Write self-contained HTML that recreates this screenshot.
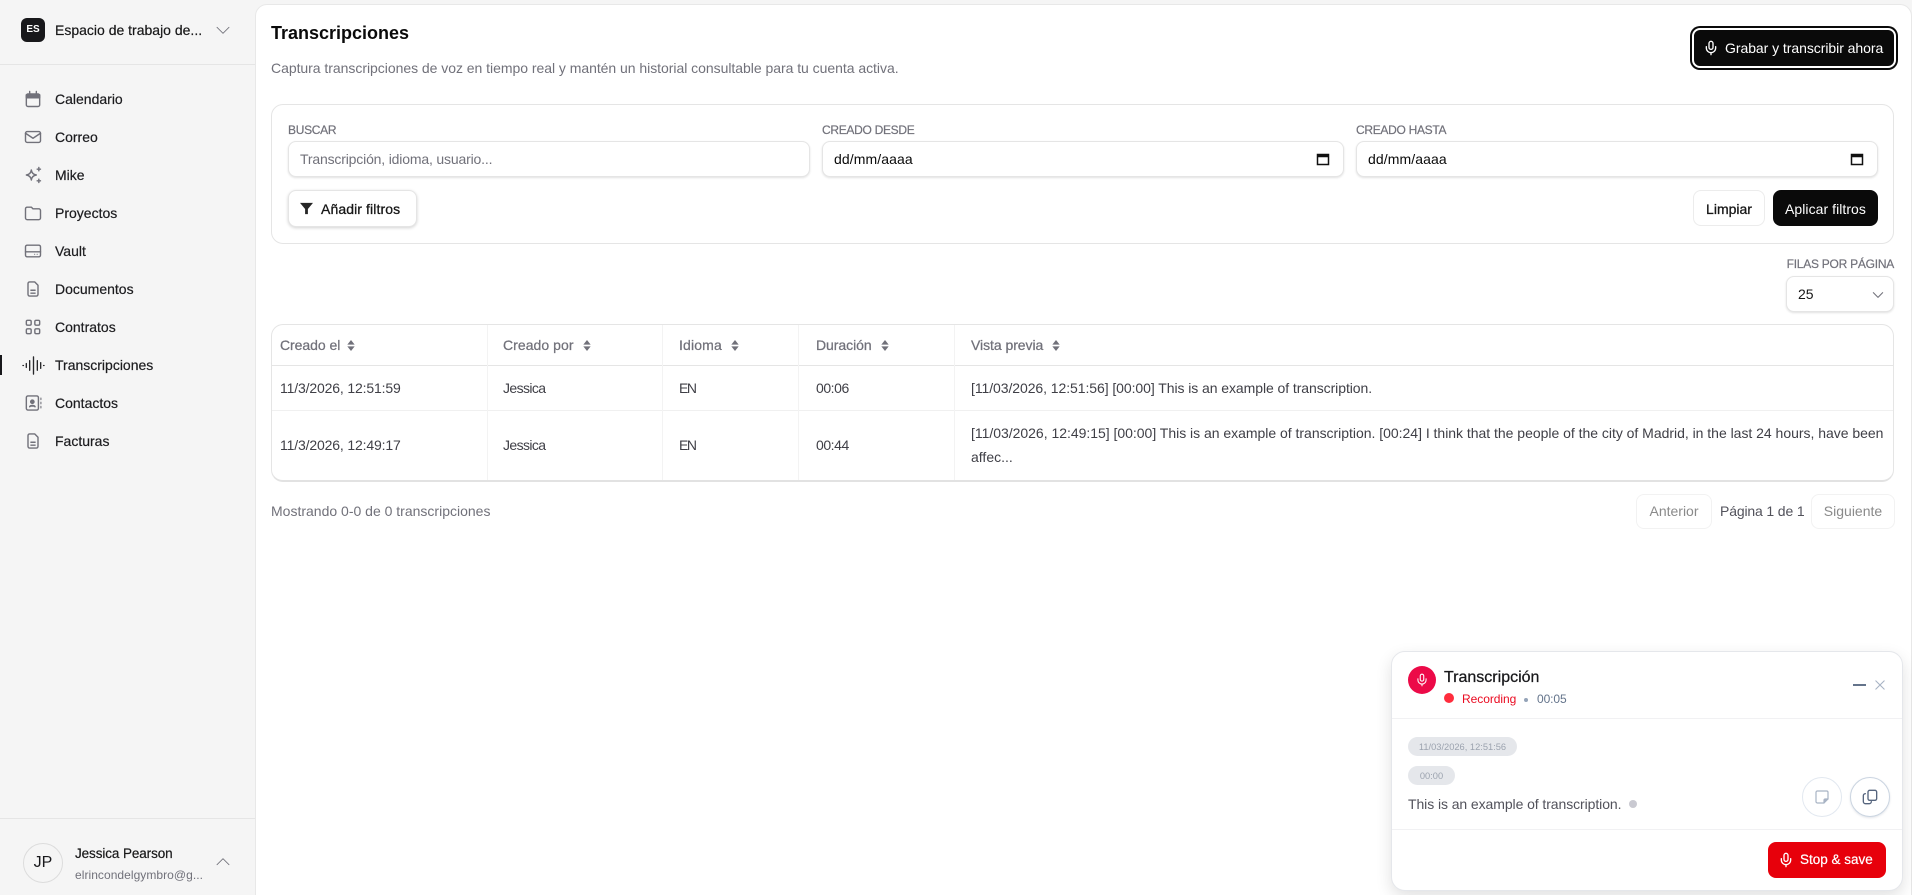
<!DOCTYPE html>
<html lang="es"><head><meta charset="utf-8"><title>Transcripciones</title>
<style>
*{box-sizing:border-box}
html,body{margin:0;padding:0;width:1912px;height:895px;overflow:hidden;background:#f5f5f5;font-family:"Liberation Sans",sans-serif;color:#171717}
#r{position:relative;width:1912px;height:895px;overflow:hidden;background:#f5f5f5}
.t{position:absolute;white-space:nowrap;line-height:20px;height:20px}
.a{position:absolute}
svg{position:absolute;display:block;fill:none;stroke:currentColor;stroke-width:2;stroke-linecap:round;stroke-linejoin:round}
.nav{font-size:14px;font-weight:500;left:55px;color:#1c1c1f;-webkit-text-stroke:.2px #1c1c1f}
.ic{left:23px;width:20px;height:20px;color:#71717a;stroke-width:1.7}
.lab{font-size:12px;color:#71717a;-webkit-text-stroke:.2px #71717a;letter-spacing:-.3px}
.box{position:absolute;background:#fff;border:1px solid #e5e5e5;border-radius:8px;box-shadow:0 1px 2px rgba(0,0,0,.12)}
.th{font-size:14px;color:#71717a;-webkit-text-stroke:.25px #71717a;line-height:20px;letter-spacing:-.05px}
.td{font-size:14px;color:#3f3f46}
.d{letter-spacing:-.15px}.j{letter-spacing:-.6px}.e{letter-spacing:-1.5px}.n{letter-spacing:-.45px}
.vl{position:absolute;top:325px;width:1px;height:155px;background:#f3f3f3}
.hl{position:absolute;left:272px;width:1621px;height:1px}
.sm{font-size:14px;-webkit-text-stroke:.3px #171717;color:#171717}
</style></head><body><div id="r">
<!-- sidebar -->
<div class="a" style="left:0;top:64px;width:255px;height:1px;background:#e5e5e5"></div>
<div class="a" style="left:21px;top:18px;width:24px;height:24px;border-radius:6px;background:#18181b;color:#fff;font-size:10px;font-weight:700;line-height:24px;text-align:center">ES</div>
<div class="t" style="left:55px;top:20px;font-size:14px;font-weight:500;-webkit-text-stroke:.2px #1c1c1f">Espacio de trabajo de...</div>
<svg viewBox="0 0 24 24" style="left:215px;top:22px;width:16px;height:16px;color:#71717a;stroke-width:1.300"><path d="m3 8 9 9 9-9"/></svg>

<svg class="ic" viewBox="0 0 24 24" style="top:89px"><rect x="4" y="6" width="16" height="15" rx="2"/><path d="M4 7h16v3.500H4z" fill="#71717a"/><path d="M8 3v3M16 3v3"/></svg><div class="t nav" style="top:89px">Calendario</div>
<svg class="ic" viewBox="0 0 24 24" style="top:127px"><rect x="3" y="5.500" width="18" height="13" rx="2"/><path d="m3 7.500 9 6 9-6"/></svg><div class="t nav" style="top:127px">Correo</div>
<svg class="ic" viewBox="0 0 24 24" style="top:165px"><path d="M10 6c.5 3.500 2.500 5.500 6 6-3.500.5-5.500 2.500-6 6-.5-3.500-2.500-5.500-6-6 3.500-.5 5.500-2.500 6-6z"/><path d="M19 3v4M17 5h4M19 17v4M17 19h4"/></svg><div class="t nav" style="top:165px">Mike</div>
<svg class="ic" viewBox="0 0 24 24" style="top:203px"><path d="M19 20a2 2 0 0 0 2-2V9a2 2 0 0 0-2-2h-7l-2-2H5a2 2 0 0 0-2 2v11a2 2 0 0 0 2 2z"/></svg><div class="t nav" style="top:203px">Proyectos</div>
<svg class="ic" viewBox="0 0 24 24" style="top:241px"><rect x="3" y="5" width="18" height="14" rx="2"/><path d="M3 13h18"/><path d="M14 16h.01M17 16h.01" stroke-width="1.300"/></svg><div class="t nav" style="top:241px">Vault</div>
<svg class="ic" viewBox="0 0 24 24" style="top:279px"><path d="M14 3.500H8a2 2 0 0 0-2 2v13a2 2 0 0 0 2 2h8a2 2 0 0 0 2-2v-11z"/><path d="M9.500 13.500h5M9.500 17h5"/></svg><div class="t nav" style="top:279px">Documentos</div>
<svg class="ic" viewBox="0 0 24 24" style="top:317px"><rect x="4" y="4" width="5.800" height="5.800" rx="1.500"/><rect x="14.200" y="4" width="5.800" height="5.800" rx="1.500"/><rect x="4" y="14.200" width="5.800" height="5.800" rx="1.500"/><rect x="14.200" y="14.200" width="5.800" height="5.800" rx="1.500"/></svg><div class="t nav" style="top:317px">Contratos</div>
<div class="a" style="left:0;top:355px;width:2px;height:20px;background:#18181b"></div>
<svg class="ic" viewBox="0 0 24 24" style="top:355px;color:#27272a;stroke-width:1.400;left:21.500px;width:23px;height:23px;margin-top:-1px"><path d="M1 12h.5M4.500 10v4M8 7v10M12 3v18M16 7v10M19.500 9v6M23 12h-.5"/></svg><div class="t nav" style="top:355px">Transcripciones</div>
<svg class="ic" viewBox="0 0 24 24" style="top:393px"><rect x="4" y="3.500" width="14.500" height="17" rx="2"/><circle cx="11.200" cy="10.500" r="2" fill="#71717a"/><path d="M8 16.500c1-2 5.500-2 6.500 0" fill="#71717a"/><path d="M21.500 6v2M21.500 11v2M21.500 16v2" stroke-width="1.300"/></svg><div class="t nav" style="top:393px">Contactos</div>
<svg class="ic" viewBox="0 0 24 24" style="top:431px"><path d="M14 3.500H8a2 2 0 0 0-2 2v13a2 2 0 0 0 2 2h8a2 2 0 0 0 2-2v-11z"/><path d="M9.500 13.500h5M9.500 17h5"/></svg><div class="t nav" style="top:431px">Facturas</div>

<div class="a" style="left:0;top:818px;width:255px;height:1px;background:#e5e5e5"></div>
<div class="a" style="left:23px;top:843px;width:40px;height:40px;border-radius:50%;border:1px solid #dcdcdc;background:#f5f5f5;font-size:16px;line-height:38px;text-align:center;color:#18181b">JP</div>
<div class="t" style="left:75px;top:844px;font-size:13.500px;font-weight:500;letter-spacing:-.1px;-webkit-text-stroke:.2px #1c1c1f">Jessica Pearson</div>
<div class="t" style="left:75px;top:865px;font-size:12px;color:#71717a;letter-spacing:.05px">elrincondelgymbro@g...</div>
<svg viewBox="0 0 24 24" style="left:215px;top:854px;width:16px;height:16px;color:#71717a;stroke-width:1.300"><path d="m3 16 9-9 9 9"/></svg>

<!-- main -->
<div class="a" style="left:255px;top:4px;width:1657px;height:900px;background:#fff;border:1px solid #e8e8e8;border-radius:12px 12px 0 0"></div>
<div class="t" style="left:271px;top:23px;font-size:18px;font-weight:700;color:#0a0a0a">Transcripciones</div>
<div class="t" style="left:271px;top:58px;font-size:14px;letter-spacing:-.035px;color:#71717a">Captura transcripciones de voz en tiempo real y mantén un historial consultable para tu cuenta activa.</div>

<div class="a" style="left:1690px;top:26px;width:208px;height:44px;border-radius:10px;background:#0a0a0a"></div>
<div class="a" style="left:1692px;top:28px;width:204px;height:40px;border-radius:8px;background:#0a0a0a;border:2px solid #fff"></div>
<svg viewBox="0 0 24 24" style="left:1703px;top:40px;width:16px;height:16px;color:#fff"><rect x="9" y="2" width="6" height="12" rx="3"/><path d="M19 10v2a7 7 0 0 1-14 0v-2M12 19v3"/></svg>
<div class="t" style="left:1725px;top:38px;font-size:14px;letter-spacing:-.05px;font-weight:500;color:#fff">Grabar y transcribir ahora</div>

<!-- filters -->
<div class="a" style="left:271px;top:104px;width:1623px;height:140px;border:1px solid #e5e5e5;border-radius:12px;background:#fff"></div>
<div class="t lab" style="left:288px;top:120px">BUSCAR</div>
<div class="t lab" style="left:822px;top:120px">CREADO DESDE</div>
<div class="t lab" style="left:1356px;top:120px">CREADO HASTA</div>
<div class="box" style="left:288px;top:141px;width:522px;height:36px"></div>
<div class="t" style="left:300px;top:149px;font-size:14px;letter-spacing:-.17px;color:#71717a">Transcripción, idioma, usuario...</div>
<div class="box" style="left:822px;top:141px;width:522px;height:36px"></div>
<div class="t" style="left:834px;top:149px;font-size:14px;letter-spacing:.1px;color:#0a0a0a">dd/mm/aaaa</div>
<svg viewBox="0 0 14 14" style="left:1316px;top:152px;width:14px;height:14px;color:#111;stroke-width:1.500;stroke-linecap:butt;stroke-linejoin:miter"><rect x="1.500" y="2.500" width="11" height="10"/><path d="M1 4h12" stroke-width="2.500"/></svg>
<div class="box" style="left:1356px;top:141px;width:522px;height:36px"></div>
<div class="t" style="left:1368px;top:149px;font-size:14px;letter-spacing:.1px;color:#0a0a0a">dd/mm/aaaa</div>
<svg viewBox="0 0 14 14" style="left:1850px;top:152px;width:14px;height:14px;color:#111;stroke-width:1.500;stroke-linecap:butt;stroke-linejoin:miter"><rect x="1.500" y="2.500" width="11" height="10"/><path d="M1 4h12" stroke-width="2.500"/></svg>

<div class="box" style="left:288px;top:190px;width:129px;height:37px;box-shadow:0 1px 3px rgba(0,0,0,.18)"></div>
<svg viewBox="0 0 14 14" style="left:300px;top:202px;width:13px;height:13px;fill:#262626;stroke:none"><path d="M0 1h14L8.500 7.500V13h-3V7.500z"/></svg>
<div class="t sm" style="left:321px;top:199px;letter-spacing:.1px">Añadir filtros</div>
<div class="a" style="left:1693px;top:190px;width:72px;height:36px;border:1px solid #ececec;border-radius:8px;background:#fff"></div>
<div class="t sm" style="left:1693px;width:72px;text-align:center;top:199px">Limpiar</div>
<div class="a" style="left:1773px;top:190px;width:105px;height:36px;border-radius:8px;background:#0a0a0a"></div>
<div class="t" style="left:1773px;width:105px;text-align:center;top:199px;font-size:14px;letter-spacing:.05px;font-weight:500;color:#fff">Aplicar filtros</div>

<div class="t lab" style="right:18px;top:254px;letter-spacing:-.25px">FILAS POR PÁGINA</div>
<div class="box" style="left:1786px;top:276px;width:108px;height:36px"></div>
<div class="t" style="left:1798px;top:284px;font-size:14px;color:#171717">25</div>
<svg viewBox="0 0 24 24" style="left:1871px;top:288px;width:14px;height:14px;color:#71717a;stroke-width:1.800"><path d="m4 8 8 8 8-8"/></svg>

<!-- table -->
<div class="a" style="left:271px;top:324px;width:1623px;height:158px;border:1px solid #e5e5e5;border-bottom:2px solid #e2e2e2;border-radius:12px;background:#fff"></div>
<div class="hl" style="top:365px;background:#e5e5e5"></div>
<div class="hl" style="top:410px;background:#f0f0f0"></div>
<div class="vl" style="left:487px"></div><div class="vl" style="left:662px"></div><div class="vl" style="left:798px"></div><div class="vl" style="left:954px"></div>
<div class="t th" style="left:280px;top:335px">Creado el</div>
<div class="t th" style="left:503px;top:335px;letter-spacing:.05px">Creado por</div>
<div class="t th" style="left:679px;top:335px;letter-spacing:.15px">Idioma</div>
<div class="t th" style="left:816px;top:335px">Duración</div>
<div class="t th" style="left:971px;top:335px">Vista previa</div>
<svg viewBox="0 0 8 12" style="left:347px;top:340px;width:8px;height:11px;fill:#71717a;stroke:none"><path d="M4 0l4 5H0zM0 7h8l-4 5z"/></svg>
<svg viewBox="0 0 8 12" style="left:583px;top:340px;width:8px;height:11px;fill:#71717a;stroke:none"><path d="M4 0l4 5H0zM0 7h8l-4 5z"/></svg>
<svg viewBox="0 0 8 12" style="left:731px;top:340px;width:8px;height:11px;fill:#71717a;stroke:none"><path d="M4 0l4 5H0zM0 7h8l-4 5z"/></svg>
<svg viewBox="0 0 8 12" style="left:881px;top:340px;width:8px;height:11px;fill:#71717a;stroke:none"><path d="M4 0l4 5H0zM0 7h8l-4 5z"/></svg>
<svg viewBox="0 0 8 12" style="left:1052px;top:340px;width:8px;height:11px;fill:#71717a;stroke:none"><path d="M4 0l4 5H0zM0 7h8l-4 5z"/></svg>

<div class="t td d" style="left:280px;top:378px">11/3/2026, 12:51:59</div>
<div class="t td j" style="left:503px;top:378px">Jessica</div>
<div class="t td e" style="left:679px;top:378px">EN</div>
<div class="t td n" style="left:816px;top:378px">00:06</div>
<div class="t td" style="left:971px;top:378px;letter-spacing:-.07px">[11/03/2026, 12:51:56] [00:00] This is an example of transcription.</div>
<div class="t td d" style="left:280px;top:435px">11/3/2026, 12:49:17</div>
<div class="t td j" style="left:503px;top:435px">Jessica</div>
<div class="t td e" style="left:679px;top:435px">EN</div>
<div class="t td n" style="left:816px;top:435px">00:44</div>
<div class="t td" style="left:971px;top:423px;letter-spacing:-.02px">[11/03/2026, 12:49:15] [00:00] This is an example of transcription. [00:24] I think that the people of the city of Madrid, in the last 24 hours, have been</div>
<div class="t td" style="left:971px;top:447px">affec...</div>

<div class="t" style="left:271px;top:501px;font-size:14px;color:#71717a">Mostrando 0-0 de 0 transcripciones</div>
<div class="a" style="left:1636px;top:494px;width:76px;height:35px;border:1px solid #f2f2f2;border-radius:8px"></div>
<div class="t" style="left:1636px;width:76px;text-align:center;top:501px;font-size:14px;color:#8a8a8a">Anterior</div>
<div class="t" style="left:1720px;top:501px;font-size:14px;letter-spacing:-.15px;color:#52525b">Página 1 de 1</div>
<div class="a" style="left:1811px;top:494px;width:84px;height:35px;border:1px solid #f2f2f2;border-radius:8px"></div>
<div class="t" style="left:1811px;width:84px;text-align:center;top:501px;font-size:14px;color:#8a8a8a">Siguiente</div>

<!-- recording card -->
<div class="a" style="left:1391px;top:651px;width:512px;height:240px;background:#fff;border:1px solid #e5e7eb;border-radius:14px;box-shadow:0 6px 16px rgba(0,0,0,.12)"></div>
<div class="a" style="left:1408px;top:666px;width:28px;height:28px;border-radius:50%;background:#ec0a48"></div>
<svg viewBox="0 0 24 24" style="left:1415px;top:673px;width:14px;height:14px;color:#fff;stroke-width:1.800"><rect x="9" y="2" width="6" height="12" rx="3"/><path d="M19 10v2a7 7 0 0 1-14 0v-2M12 19v3"/></svg>
<div class="t" style="left:1444px;top:668px;font-size:16px;font-weight:500;color:#18181b;-webkit-text-stroke:.25px #18181b">Transcripción</div>
<div class="a" style="left:1444px;top:693px;width:10px;height:10px;border-radius:50%;background:#ff2d3d"></div>
<div class="t" style="left:1462px;top:689px;font-size:12px;letter-spacing:-.05px;color:#ea0a20">Recording</div>
<div class="a" style="left:1524px;top:698px;width:4px;height:4px;border-radius:50%;background:#94a3b8"></div>
<div class="t" style="left:1537px;top:689px;font-size:12px;letter-spacing:-.1px;color:#64748b">00:05</div>
<div class="a" style="left:1853px;top:684px;width:13px;height:2px;background:#64748b"></div>
<svg viewBox="0 0 12 12" style="left:1875px;top:680px;width:10px;height:10px;color:#a8b3c4;stroke-width:1.300"><path d="M1 1l10 10M11 1 1 11"/></svg>
<div class="a" style="left:1392px;top:718px;width:510px;height:1px;background:#f1f1f3"></div>
<div class="a" style="left:1408px;top:737px;width:109px;height:19px;border-radius:10px;background:#e5e7eb;color:#9ca3af;font-size:9.300px;line-height:20px;text-align:center">11/03/2026, 12:51:56</div>
<div class="a" style="left:1408px;top:766px;width:47px;height:19px;border-radius:10px;background:#e5e7eb;color:#9ca3af;font-size:9.300px;line-height:20px;text-align:center">00:00</div>
<div class="t" style="left:1408px;top:794px;font-size:14px;letter-spacing:-.08px;color:#52525b">This is an example of transcription.</div>
<div class="a" style="left:1629px;top:800px;width:8px;height:8px;border-radius:50%;background:#c9c9d1"></div>
<div class="a" style="left:1802px;top:777px;width:40px;height:40px;border-radius:50%;border:1px solid #e2e8f0;background:#fff"></div>
<svg viewBox="0 0 24 24" style="left:1814px;top:789px;width:16px;height:16px;color:#a8b3c4;stroke-width:1.800"><path d="M15 21H5a2 2 0 0 1-2-2V5a2 2 0 0 1 2-2h14a2 2 0 0 1 2 2v10z"/><path d="M21 15h-4a2 2 0 0 0-2 2v4" fill="#a8b3c4"/></svg>
<div class="a" style="left:1850px;top:777px;width:40px;height:40px;border-radius:50%;border:1px solid #cbd5e1;background:#fff;box-shadow:0 1px 2px rgba(100,116,139,.2)"></div>
<svg viewBox="0 0 24 24" style="left:1862px;top:789px;width:16px;height:16px;color:#56657e;stroke-width:2"><rect x="9" y="2" width="13" height="15" rx="2.500"/><path d="M5 7a3 3 0 0 0-3 3v9a3 3 0 0 0 3 3h6a3 3 0 0 0 3-3"/></svg>
<div class="a" style="left:1392px;top:829px;width:510px;height:1px;background:#f1f1f3"></div>
<div class="a" style="left:1768px;top:842px;width:118px;height:36px;border-radius:8px;background:#e7000b"></div>
<svg viewBox="0 0 24 24" style="left:1778px;top:852px;width:16px;height:16px;color:#fff"><rect x="9" y="2" width="6" height="12" rx="3"/><path d="M19 10v2a7 7 0 0 1-14 0v-2M12 19v3"/></svg>
<div class="t" style="left:1800px;top:850px;font-size:13.500px;font-weight:500;color:#fff;-webkit-text-stroke:.2px #fff">Stop &amp; save</div>
</div></body></html>
